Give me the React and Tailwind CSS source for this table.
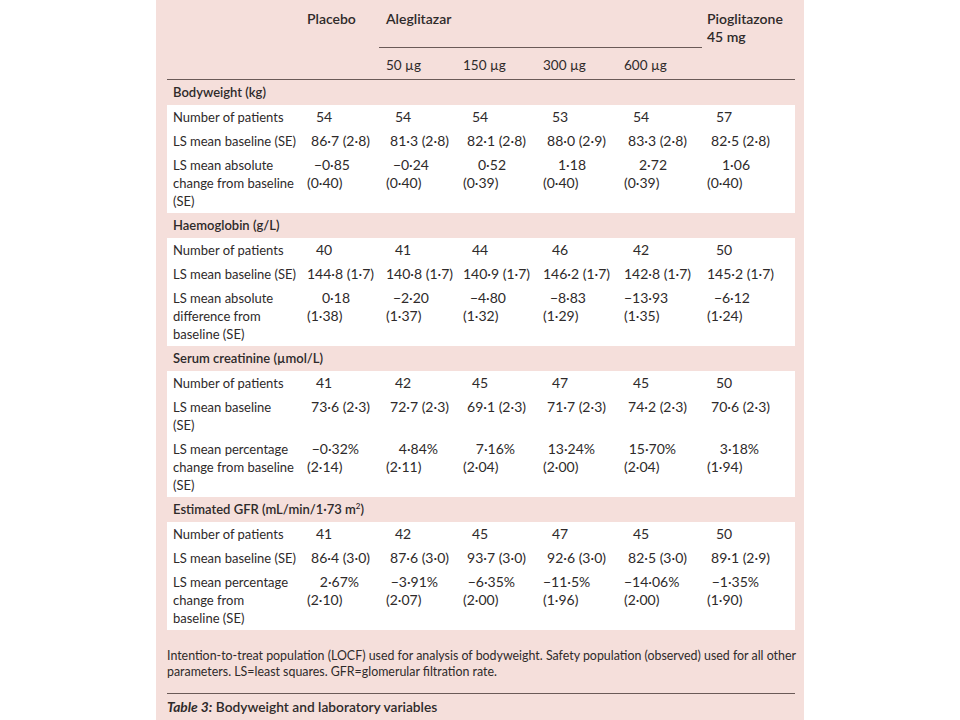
const cols = 'grid grid-cols-[140px_79px_77px_80px_81px_83px_88px]'

const sections = [
  {
    title: 'Bodyweight (kg)',
    rows: [
      { label: ['Number of patients'], kind: 'n', values: ['54', '54', '54', '53', '54', '57'] },
      { label: ['LS mean baseline (SE)'], kind: 'base', values: ['86·7 (2·8)', '81·3 (2·8)', '82·1 (2·8)', '88·0 (2·9)', '83·3 (2·8)', '82·5 (2·8)'] },
      {
        label: ['LS mean absolute', 'change from baseline', '(SE)'],
        kind: 'abs',
        values: [['−0·85', '(0·40)'], ['−0·24', '(0·40)'], ['0·52', '(0·39)'], ['1·18', '(0·40)'], ['2·72', '(0·39)'], ['1·06', '(0·40)']],
      },
    ],
  },
  {
    title: 'Haemoglobin (g/L)',
    rows: [
      { label: ['Number of patients'], kind: 'n', values: ['40', '41', '44', '46', '42', '50'] },
      { label: ['LS mean baseline (SE)'], kind: 'base', values: ['144·8 (1·7)', '140·8 (1·7)', '140·9 (1·7)', '146·2 (1·7)', '142·8 (1·7)', '145·2 (1·7)'] },
      {
        label: ['LS mean absolute', 'difference from', 'baseline (SE)'],
        kind: 'abs',
        values: [['0·18', '(1·38)'], ['−2·20', '(1·37)'], ['−4·80', '(1·32)'], ['−8·83', '(1·29)'], ['−13·93', '(1·35)'], ['−6·12', '(1·24)']],
      },
    ],
  },
  {
    title: 'Serum creatinine (µmol/L)',
    rows: [
      { label: ['Number of patients'], kind: 'n', values: ['41', '42', '45', '47', '45', '50'] },
      { label: ['LS mean baseline', '(SE)'], kind: 'base', values: ['73·6 (2·3)', '72·7 (2·3)', '69·1 (2·3)', '71·7 (2·3)', '74·2 (2·3)', '70·6 (2·3)'] },
      {
        label: ['LS mean percentage', 'change from baseline', '(SE)'],
        kind: 'pct',
        values: [['−0·32%', '(2·14)'], ['4·84%', '(2·11)'], ['7·16%', '(2·04)'], ['13·24%', '(2·00)'], ['15·70%', '(2·04)'], ['3·18%', '(1·94)']],
      },
    ],
  },
  {
    title: (
      <>
        Estimated GFR (mL/min/1·73 m<sup className="text-[8px]">2</sup>)
      </>
    ),
    rows: [
      { label: ['Number of patients'], kind: 'n', values: ['41', '42', '45', '47', '45', '50'] },
      { label: ['LS mean baseline (SE)'], kind: 'base', values: ['86·4 (3·0)', '87·6 (3·0)', '93·7 (3·0)', '92·6 (3·0)', '82·5 (3·0)', '89·1 (2·9)'] },
      {
        label: ['LS mean percentage', 'change from', 'baseline (SE)'],
        kind: 'pct',
        values: [['2·67%', '(2·10)'], ['−3·91%', '(2·07)'], ['−6·35%', '(2·00)'], ['−11·5%', '(1·96)', true], ['−14·06%', '(2·00)'], ['−1·35%', '(1·90)']],
      },
    ],
  },
]

function Cell({ kind, v }) {
  if (kind === 'n') return <div className="pl-[9px] text-[14px]">{v}</div>
  if (kind === 'base')
    return (
      <div className="text-[14px]">
        <div className="w-[63px] text-right whitespace-nowrap">{v}</div>
      </div>
    )
  // change from baseline: value decimal-aligned, SE underneath
  return (
    <div className="text-[14px]">
      <div className={kind === 'pct' ? 'w-[52px] text-right whitespace-nowrap' : 'w-[43px] text-right whitespace-nowrap'}>
        {v[0]}
        {v[2] && <span className="invisible">0</span>}
      </div>
      <div>{v[1]}</div>
    </div>
  )
}

function DataRow({ row }) {
  return (
    <div className={`${cols} py-[3px] leading-[18px]`}>
      <div className="pl-[6px]">
        {row.label.map((l, i) => (
          <div key={i}>{l}</div>
        ))}
      </div>
      {row.values.map((v, i) => (
        <Cell key={i} kind={row.kind} v={v} />
      ))}
    </div>
  )
}

export default function App() {
  return (
    <div className="min-h-[720px] bg-white">
      <div
        className="ml-[156px] w-[648px] min-h-[720px] bg-[#f5dfdb] pl-[11px] pr-[9px] text-[13px] text-[#2e2a2a]"
        style={{ fontFamily: 'Lato, "Noto Sans", sans-serif' }}
      >
        {/* column headings */}
        <div className={`${cols} border-b border-[#6a5a57] leading-[18px]`}>
          <div className="row-span-2" />
          <div className="pt-[10px] text-[14px] font-semibold">Placebo</div>
          <div className="col-span-4 -ml-[7px] mr-[5px] h-[48px] border-b border-[#6a5a57] pt-[10px] pl-[7px] text-[14px] font-semibold">
            Aleglitazar
          </div>
          <div className="pt-[10px] text-[14px] font-semibold">
            <div>Pioglitazone</div>
            <div>45 mg</div>
          </div>
          <div />
          <div className="pt-[8px] pb-[5px] text-[13.5px]">50 µg</div>
          <div className="pt-[8px] pb-[5px] text-[13.5px]">150 µg</div>
          <div className="pt-[8px] pb-[5px] text-[13.5px]">300 µg</div>
          <div className="pt-[8px] pb-[5px] text-[13.5px]">600 µg</div>
          <div />
        </div>

        {sections.map((s, i) => (
          <div key={i}>
            <div className="flex h-[25px] items-center pl-[6px] font-semibold">{s.title}</div>
            <div className="bg-white">
              {s.rows.map((r, j) => (
                <DataRow key={j} row={r} />
              ))}
            </div>
          </div>
        ))}

        <p className="mt-[18px] whitespace-nowrap text-[12.4px] leading-[16px]">
          Intention-to-treat population (LOCF) used for analysis of bodyweight. Safety population (observed) used for all other
          <br />
          parameters. LS=least squares. GFR=glomerular filtration rate.
        </p>
        <div className="mt-[13px] border-t border-[#6a5a57] pt-[4px] text-[13.75px] leading-[18px]">
          <span className="font-bold italic">Table 3:</span> <span className="font-semibold">Bodyweight and laboratory variables</span>
        </div>
      </div>
    </div>
  )
}
